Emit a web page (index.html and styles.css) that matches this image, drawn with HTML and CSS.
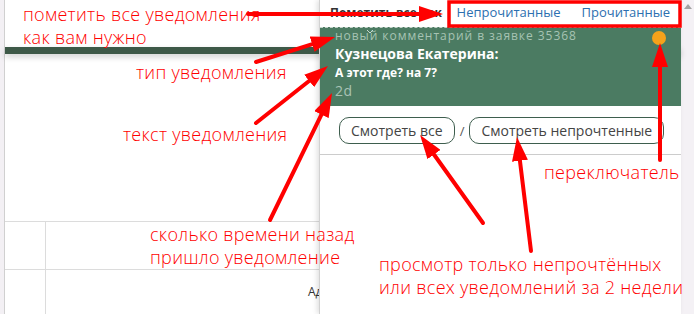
FILE: index.html
```html
<!DOCTYPE html>
<html lang="ru">
<head>
  <meta charset="UTF-8">
  <meta name="viewport" content="width=device-width, initial-scale=1.0">
  <title>Уведомления</title>
  <link rel="stylesheet" href="styles.css">
</head>
<body>
  <div class="edge"></div>

  <div class="page">
    <div class="topbar"></div>

    <div class="grid">
      <div class="row">
        <div class="cell-num"></div>
        <div class="cell"></div>
      </div>
      <div class="row">
        <div class="cell-num"></div>
        <div class="cell cell-addr">Адрес</div>
      </div>
    </div>

    <!-- выпадающая панель уведомлений -->
    <div class="panel">
      <div class="panel-head">
        <span class="panel-title">Пометить все как</span>
        <div class="tabs">
          <a class="tab">Непрочитанные</a>
          <a class="tab">Прочитанные</a>
        </div>
      </div>

      <div class="item">
        <svg class="chevron" width="8" height="5" viewBox="0 0 8 5"><path d="M1 1 L4 4 L7 1" fill="none" stroke="#c9d8cf" stroke-width="1"/></svg>
        <div class="item-type">новый комментарий в заявке 35368</div>
        <div class="item-author">Кузнецова Екатерина:</div>
        <div class="item-text">А этот где? на 7?</div>
        <div class="item-time">2d</div>
        <span class="dot"></span>
      </div>

      <div class="actions">
        <button class="btn">Смотреть все</button>
        <span class="sep">/</span>
        <button class="btn">Смотреть непрочтенные</button>
      </div>
    </div>
  </div>

  <div class="scroll">
    <div class="scroll-up"></div>
  </div>

  <!-- пометки поверх скриншота -->
  <svg class="arrows" width="694" height="314" viewBox="0 0 694 314">
    <defs>
      <marker id="head" markerUnits="userSpaceOnUse" viewBox="0 0 24 16" markerWidth="24" markerHeight="16" refX="16" refY="8" orient="auto">
        <path d="M0 0 L24 8 L0 16 z" fill="#ff0000"/>
      </marker>
    </defs>
    <rect x="449" y="2" width="231" height="24" fill="none" stroke="#ff0000" stroke-width="3.5"/>
    <g stroke="#ff0000" stroke-width="4" stroke-linecap="round" marker-end="url(#head)">
      <line x1="248" y1="14" x2="435" y2="14"/>
      <line x1="256" y1="62" x2="327.4" y2="39.4"/>
      <line x1="256" y1="123" x2="321.7" y2="71"/>
      <line x1="270" y1="220" x2="328.5" y2="100.2"/>
      <line x1="483" y1="223" x2="424.7" y2="141.5"/>
      <line x1="531" y1="251" x2="518" y2="144.9"/>
      <line x1="660" y1="160" x2="660" y2="51"/>
    </g>
  </svg>

  <div class="note note-mark">пометить все уведомления<br>как вам нужно</div>
  <div class="note note-type">тип уведомления</div>
  <div class="note note-text">текст уведомления</div>
  <div class="note note-time">сколько времени назад<br>пришло уведомление</div>
  <div class="note note-view">просмотр только непрочтённых<br>или всех уведомлений за 2 недели</div>
  <div class="note note-switch">переключатель</div>
</body>
</html>
```

FILE: styles.css
```css
body {
  margin: 0;
  padding: 0;
  font-family: "Open Sans", "Noto Sans", sans-serif;
  width: 694px;
  height: 314px;
  overflow: hidden;
  display: flex;
  position: relative;
  background: #fff;
}

.edge {
  width: 4px;
  background: #f3f0f4;
  border-right: 1px solid #d0d0d0;
}

.page {
  flex: 1;
  position: relative;
  background: #fff;
}

.topbar {
  margin-top: 47px;
  height: 7px;
  background: #3e5948;
  box-shadow: 0 3px 6px rgba(0, 0, 0, 0.18);
}

.grid {
  margin-top: 167px;
}

.row {
  display: flex;
  height: 47px;
  border-top: 1px solid #dcdcdc;
}

.row:last-child {
  height: 44px;
}

.cell-num {
  width: 40px;
  border-right: 1px solid #dcdcdc;
}

.cell {
  flex: 1;
}

.cell-addr {
  padding: 14px 0 0 262px;
  font-size: 12px;
  line-height: 16px;
  color: #333;
  white-space: nowrap;
}

/* Панель уведомлений */
.panel {
  position: absolute;
  top: 0;
  right: 0;
  bottom: 0;
  width: 362px;
  box-sizing: border-box;
  background: #fff;
  border-left: 1px solid #d2d2d2;
  box-shadow: -2px 0 5px rgba(0, 0, 0, 0.12);
  z-index: 2;
}

.panel-head {
  height: 27px;
  box-sizing: border-box;
  display: flex;
  align-items: baseline;
  padding: 3px 11px 0 10px;
}

.panel-title {
  font-size: 12px;
  font-weight: bold;
  line-height: 18px;
  color: #333;
}

.tabs {
  margin-left: auto;
  display: flex;
  gap: 21px;
}

.tab {
  font-size: 13px;
  line-height: 18px;
  color: #2c6fb0;
  cursor: pointer;
}

.item {
  position: relative;
  background: #4b7b62;
  border-top: 1px dashed #c4d3ca;
  padding: 0 15px 5px;
}

.chevron {
  position: absolute;
  left: 46px;
  top: 1px;
}

.item-type {
  font-size: 12px;
  line-height: 16px;
  letter-spacing: 0.95px;
  color: #a6c3b3;
}

.item-author {
  font-size: 14px;
  font-weight: bold;
  line-height: 20px;
  color: #fff;
}

.item-text {
  font-size: 12px;
  font-weight: bold;
  line-height: 17px;
  color: #fff;
}

.item-time {
  font-size: 14px;
  line-height: 20px;
  letter-spacing: 0.5px;
  color: #a9c3b5;
}

.dot {
  position: absolute;
  top: 3px;
  right: 15px;
  width: 14px;
  height: 14px;
  border-radius: 50%;
  background: #f5a21b;
}

.actions {
  display: flex;
  align-items: center;
  padding: 11px 0 10px 19px;
  border-bottom: 1px solid #cccccc;
}

.btn {
  font-family: "Open Sans", "Noto Sans", sans-serif;
  font-size: 14px;
  line-height: 25px;
  padding: 0 11px;
  color: #444;
  background: #fff;
  border: 1px solid #3e5e4e;
  border-radius: 10px;
  cursor: pointer;
}

.sep {
  margin: 0 5px;
  font-size: 13px;
  color: #555;
}

.scroll {
  width: 13px;
  background: #f4f1f5;
}

.scroll-up {
  width: 0;
  height: 0;
  margin: 4px auto 0;
  border-left: 4px solid transparent;
  border-right: 4px solid transparent;
  border-bottom: 5px solid #a3a3a3;
}

/* Пометки */
.arrows {
  position: absolute;
  left: 0;
  top: 0;
  z-index: 5;
  pointer-events: none;
}

.note {
  position: absolute;
  z-index: 6;
  font-size: 18px;
  font-weight: 300;
  line-height: 23px;
  letter-spacing: 0.3px;
  color: #ff0000;
  white-space: nowrap;
  pointer-events: none;
}

.note-mark { left: 23px; top: 3px; }
.note-type { left: 136px; top: 61px; }
.note-text { left: 123px; top: 123px; }
.note-time { left: 150px; top: 223px; }
.note-view { left: 379px; top: 253px; }
.note-switch { left: 544px; top: 161px; }
```
